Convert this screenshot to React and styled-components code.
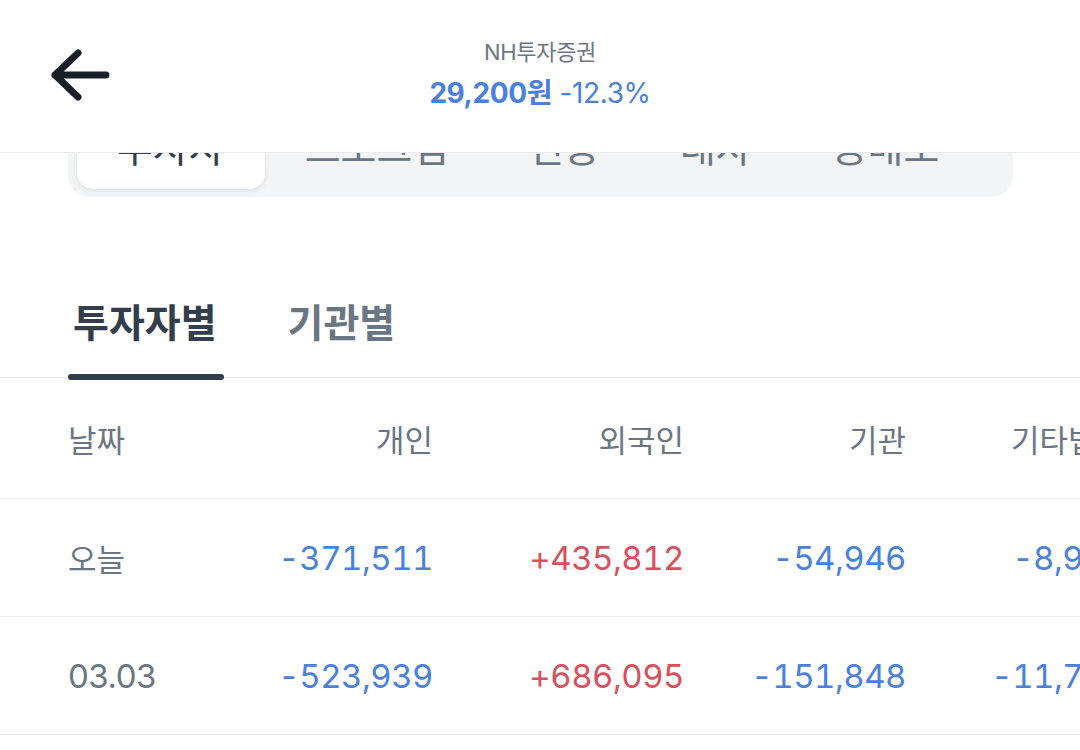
import React from 'react'
import styled, { createGlobalStyle } from 'styled-components'

const GlobalStyle = createGlobalStyle`
  html, body {
    margin: 0;
    padding: 0;
    background: #ffffff;
    overflow: hidden;
  }
  body {
    font-family: "Inter", "Noto Sans CJK KR", sans-serif;
    -webkit-font-smoothing: antialiased;
  }
`

const segments = ['투자자', '프로그램', '신용', '대차', '공매도']

const rows = [
  { date: '오늘', values: ['-371,511', '+435,812', '-54,946', '-8,924'] },
  { date: '03.03', values: ['-523,939', '+686,095', '-151,848', '-11,708'] },
]

const columns = ['개인', '외국인', '기관', '기타법인']

const App = () => {
  return (
    <React.Fragment>
      <GlobalStyle />
      <Page>
        <Header>
          <BackButton aria-label="back">
            <svg width="70" height="60" viewBox="0 0 70 60" fill="none">
              <path
                d="M66 27H15M38 5L15 27L38 49"
                stroke="#191f28"
                strokeWidth="7"
                strokeLinecap="round"
                strokeLinejoin="round"
              />
            </svg>
          </BackButton>
          <Title>
            <Name>NH투자증권</Name>
            <Price>
              <strong>29,200원</strong> -12.3%
            </Price>
          </Title>
        </Header>

        <Segmented>
          {segments.map((label, i) => (
            <Segment key={label} active={i === 0}>{label}</Segment>
          ))}
        </Segmented>

        <TabBar>
          <Tab active>투자자별</Tab>
          <Tab>기관별</Tab>
        </TabBar>

        <Table>
          <HeadRow>
            <LabelCell>날짜</LabelCell>
            {columns.map(c => (
              <HeadCell key={c}>{c}</HeadCell>
            ))}
          </HeadRow>
          {rows.map(row => (
            <Row key={row.date}>
              <DateCell korean={row.date === '오늘'}>{row.date}</DateCell>
              {row.values.map((v, i) => (
                <NumCell key={i} up={v.startsWith('+')}>{v}</NumCell>
              ))}
            </Row>
          ))}
        </Table>
      </Page>
    </React.Fragment>
  )
}

const Page = styled.div`
  width: 1080px;
  height: 750px;
  overflow: hidden;
  background: #fff;
`

const Header = styled.header`
  position: relative;
  z-index: 2;
  height: 152px;
  background: #fff;
  border-bottom: 1px solid #e8eaed;
  display: flex;
  align-items: center;
  justify-content: center;
`

const BackButton = styled.button`
  position: absolute;
  left: 40px;
  top: 48px;
  width: 70px;
  height: 60px;
  padding: 0;
  border: 0;
  background: transparent;
  display: flex;
`

const Title = styled.div`
  display: flex;
  flex-direction: column;
  align-items: center;
  margin-top: -3px;
`

const Name = styled.div`
  font-size: 22px;
  color: #6b7684;
  line-height: 32px;
  letter-spacing: -0.3px;
  margin-bottom: 4px;
`

const Price = styled.div`
  font-size: 28px;
  line-height: 42px;
  color: #4a80e0;
  letter-spacing: -0.4px;
  strong {
    font-weight: 700;
  }
`

const Segmented = styled.div`
  position: relative;
  z-index: 1;
  margin: -60px 67px 0 68px;
  height: 104px;
  padding: 8px 9px;
  box-sizing: border-box;
  background: #f2f4f6;
  border-radius: 22px;
  display: flex;
`

const Segment = styled.div`
  flex: none;
  padding: 0 40px;
  display: flex;
  align-items: center;
  justify-content: center;
  border-radius: 16px;
  font-family: "Noto Sans CJK KR", sans-serif;
  font-size: 39px;
  color: ${p => (p.active ? '#333d4b' : '#6b7684')};
  background: ${p => (p.active ? '#ffffff' : 'transparent')};
  box-shadow: ${p => (p.active ? '0 2px 6px rgba(0, 0, 0, 0.08)' : 'none')};
`

const TabBar = styled.div`
  margin-top: 76px;
  padding: 0 68px;
  display: flex;
  gap: 59px;
  border-bottom: 1px solid #e8eaed;
`

const Tab = styled.div`
  position: relative;
  height: 104px;
  padding: 0 7px 10px 5px;
  box-sizing: border-box;
  display: flex;
  align-items: center;
  font-family: "Noto Sans CJK KR", sans-serif;
  font-size: 39px;
  font-weight: 700;
  color: ${p => (p.active ? '#333d4b' : '#6b7684')};

  &::after {
    content: '';
    display: ${p => (p.active ? 'block' : 'none')};
    position: absolute;
    left: 0;
    right: 0;
    bottom: -3px;
    height: 6px;
    border-radius: 3px;
    background: #333d4b;
  }
`

const Table = styled.div`
  display: flex;
  flex-direction: column;
`

const Row = styled.div`
  display: grid;
  grid-template-columns: 155px 210px 251px 222px 219px;
  padding-left: 68px;
  height: 117px;
  align-items: center;
  border-bottom: 1px solid #e8eaed;
  white-space: nowrap;
`

const HeadRow = styled(Row)`
  height: 120px;
`

const LabelCell = styled.div`
  font-family: "Noto Sans CJK KR", sans-serif;
  font-size: 31px;
  color: #6b7684;
`

const HeadCell = styled(LabelCell)`
  text-align: right;
`

const DateCell = styled.div`
  font-family: ${p => (p.korean ? '"Noto Sans CJK KR", sans-serif' : '"Inter", sans-serif')};
  font-size: ${p => (p.korean ? '31px' : '33px')};
  color: #6b7684;
  letter-spacing: ${p => (p.korean ? '0' : '-0.5px')};
`

const NumCell = styled.div`
  text-align: right;
  font-size: 33px;
  font-variant-numeric: tabular-nums;
  letter-spacing: -0.5px;
  color: ${p => (p.up ? '#d9505c' : '#4a80e0')};
`

export default App
